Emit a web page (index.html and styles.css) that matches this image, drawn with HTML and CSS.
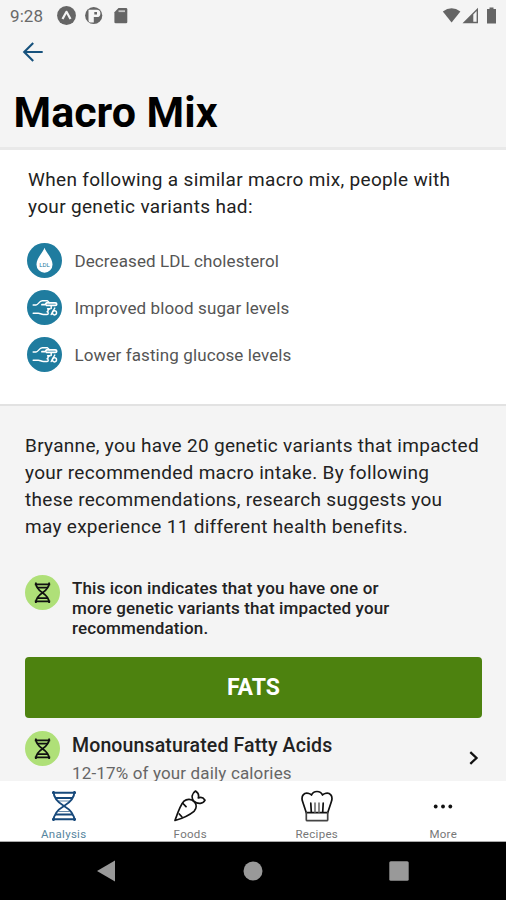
FILE: index.html
```html
<!DOCTYPE html>
<html lang="en">
<head>
<meta charset="utf-8">
<title>Macro Mix</title>
<link rel="stylesheet" href="styles.css">
</head>
<body>
<svg class="defs" width="0" height="0" aria-hidden="true">
  <symbol id="hand" viewBox="0 0 34 34">
    <circle cx="17" cy="17" r="17" fill="#1f7c9f"/>
    <g fill="none" stroke="#fff" stroke-width="1.400" stroke-linecap="round" stroke-linejoin="round">
      <path d="M6 14.500h2.800c2.200 0 3-4 6-4h5l2 1.800"/>
      <path d="M14.500 14.300h3l1.500-1.800h8.500c1.800 0 1.800 2.500 0 2.500H19" stroke-width="1.700"/>
      <path d="M6 22.500h5c2 0 2.500 1.300 5 1.300h3.500c1.500 0 1.500-2.600 0-2.600M20 18.300h2.500c-1 0-2.200.8-2.200 2.300"/>
      <path d="M27 17.500l-3.500 6.300M23.500 15.500v2.500"/>
      <circle cx="26.700" cy="22.200" r="2"/>
    </g>
  </symbol>
  <symbol id="dna-badge" viewBox="0 0 34 34">
    <circle cx="17" cy="17" r="17" fill="#afe078"/>
    <g fill="none" stroke="#111" stroke-width="1.700">
      <path d="M9.500 9h15M9.500 25.500h15M12 12.300h10M12 22.500h10"/>
      <path d="M10.500 7.200c0 4 2.500 7.300 6.500 10s6.500 6 6.500 10M23.500 7.200c0 4-2.500 7.300-6.500 10s-6.500 6-6.500 10"/>
    </g>
  </symbol>
</svg>
<div class="phone">
  <header class="header">
    <div class="status">
      <span class="clock">9:28</span>
      <svg class="notices" width="74" height="20" viewBox="0 0 74 20">
        <circle cx="9.500" cy="9.500" r="9.400" fill="#656565"/>
        <path d="M5.500 13 9.500 5.800l4 7.200" fill="none" stroke="#f4f4f4" stroke-width="2.200" stroke-linejoin="round"/>
        <circle cx="36.700" cy="9.500" r="8.600" fill="#656565"/>
        <path d="M31.500 3.800h8.300a3.600 3.600 0 0 1 0 7.200h-3v5.500h-3.300q-2 0-2-2z" fill="#f4f4f4"/>
        <path d="M37.300 6h2.700v2.500h-2.700z" fill="#656565"/>
        <path d="M61.500 2H69q1.300 0 1.300 1.300V16q0 1.300-1.300 1.300H58.700q-1.300 0-1.300-1.300V6.300z" fill="#656565"/>
        <path d="M61.500 5.200h6.500" stroke="#c4c4c4" stroke-width="1.800"/>
      </svg>
      <svg class="signals" width="58" height="18" viewBox="0 0 58 18">
        <path d="M.8 4.500Q9.600-2 18.400 4.500L9.600 15.500z" fill="#656565"/>
        <path d="M20.500 16.200 36 .7v15.500z" fill="#656565"/>
        <path d="M31.300 7.400 34.600 4.100v10.700h-3.300z" fill="#f4f4f4"/>
        <path d="M45 2h2.500V.5h4V2H54v14.500h-9z" fill="#656565"/>
      </svg>
    </div>
    <svg class="back" width="22" height="20" viewBox="0 0 22 20" fill="none" stroke="#17527d" stroke-width="2.100">
      <path d="M20.700 10H2.500M11.200 .900 2.200 10l9 9.100"/>
    </svg>
    <h1>Macro Mix</h1>
  </header>

  <section class="benefits">
    <p class="intro">When following a similar macro mix, people with<br>your genetic variants had:</p>
    <ul>
      <li>
        <svg width="35" height="35" viewBox="0 0 34 34">
          <circle cx="17" cy="17" r="17" fill="#1f7c9f"/>
          <path d="M17 4.500C16 8.500 9.200 14.500 9.200 21a7.800 7.800 0 0 0 15.600 0C24.800 14.500 18 8.500 17 4.500z" fill="#fff"/>
          <text class="ldl" x="17" y="23.500" text-anchor="middle">LDL</text>
        </svg>
        <span>Decreased LDL cholesterol</span>
      </li>
      <li><svg width="35" height="35"><use href="#hand"/></svg><span>Improved blood sugar levels</span></li>
      <li><svg width="35" height="35"><use href="#hand"/></svg><span>Lower fasting glucose levels</span></li>
    </ul>
  </section>

  <main class="details">
    <p class="summary">Bryanne, you have 20 genetic variants that impacted<br>your recommended macro intake. By following<br>these recommendations, research suggests you<br>may experience 11 different health benefits.</p>
    <div class="note">
      <svg width="35" height="35"><use href="#dna-badge"/></svg>
      <p>This icon indicates that you have one or<br>more genetic variants that impacted your<br>recommendation.</p>
    </div>
    <div class="category">FATS</div>
    <div class="item">
      <svg width="35" height="35"><use href="#dna-badge"/></svg>
      <div class="item-text">
        <h2>Monounsaturated Fatty Acids</h2>
        <p>12-17% of your daily calories</p>
      </div>
      <svg class="chevron" width="10" height="14" viewBox="0 0 10 14" fill="none" stroke="#111" stroke-width="2.300"><path d="M1.300 1.200 7.500 7l-6.200 5.800"/></svg>
    </div>
  </main>

  <nav class="tabs">
    <a class="tab active">
      <svg width="32" height="32" viewBox="0 0 32 32" fill="none" stroke="#17497b" stroke-width="1.900">
        <path d="M4 2.800h24M4 29.200h24M7 8h18M7 24.500h18" />
        <path d="M10.500 11h11M10.500 21.500h11" stroke="#6589aa" stroke-width="1.200"/>
        <path d="M5.500 1c0 6.500 4.500 11.500 10.500 15s10.500 8.500 10.500 15M26.500 1c0 6.500-4.500 11.500-10.500 15S5.500 24.500 5.500 31"/>
      </svg>
      <span>Analysis</span>
    </a>
    <a class="tab">
      <svg width="32" height="32" viewBox="0 0 32 32" fill="none" stroke="#111" stroke-width="1.700" stroke-linejoin="round" stroke-linecap="round">
        <path d="M1 30.500C4 22 6.500 14.500 10 11.200c3-2.800 7.500-2.400 10 .3 2.900 3 2.800 7 0 9.800C16 24.600 9 28.200 1 30.500z"/>
        <path d="M19.500 11C17 7 18.200 3.200 21.500 1c3 2 3.600 4.400 2.800 7 2.500-1.200 5-.4 6.700 2.200-1.800 3.600-6.800 4.600-11.500.8zM9 13.500l3 3.200M5.300 24l2.500 2.800"/>
      </svg>
      <span>Foods</span>
    </a>
    <a class="tab">
      <svg width="32" height="32" viewBox="0 0 32 32" fill="none" stroke="#111" stroke-width="1.700" stroke-linejoin="round" stroke-linecap="round">
        <path d="M5.300 22.700 1.600 11.500C-.3 6 3 2 8 3.500q1.500.4 2.500 1.500C12.500.3 19.500.3 21.500 5q1-1.100 2.500-1.500c5-1.500 8.300 2.500 6.400 8l-3.700 11.200z"/>
        <path d="M5.300 22.700v7q0 1 1 1h19.400q1 0 1-1v-7" stroke="#444"/>
        <path d="M9.800 13.200l.5 9M22.200 13.200l-.5 9"/>
        <path d="M14 13v9M18 13v9" stroke="#777"/>
      </svg>
      <span>Recipes</span>
    </a>
    <a class="tab">
      <svg width="32" height="32" viewBox="0 0 32 32" fill="#111"><circle cx="8.700" cy="16.500" r="1.900"/><circle cx="16" cy="16.500" r="1.900"/><circle cx="23.300" cy="16.500" r="1.900"/></svg>
      <span>More</span>
    </a>
  </nav>
  <footer class="system">
    <svg width="20" height="24" viewBox="0 0 20 24"><path d="M1 12 19 1.500v21z" fill="#999"/></svg>
    <svg width="20" height="20" viewBox="0 0 20 20"><circle cx="10" cy="10" r="9.500" fill="#999"/></svg>
    <svg width="20" height="20" viewBox="0 0 20 20"><rect x=".3" y=".3" width="19.400" height="19.400" rx="1.500" fill="#999"/></svg>
  </footer>
</div>
</body>
</html>
```

FILE: styles.css
```css
* { box-sizing: border-box; margin: 0; padding: 0; }

body {
  font-family: Roboto, sans-serif;
  color: #222;
  background: #f4f4f4;
  overflow: hidden;
}

svg { display: block; flex: none; }
.defs { position: absolute; }

.phone {
  width: 506px;
  height: 900px;
  display: flex;
  flex-direction: column;
  overflow: hidden;
}

.header { height: 150px; flex: none; border-bottom: 3px solid #e9e9e9; }

.status {
  height: 32px;
  display: flex;
  align-items: center;
  padding: 0 8px 0 10px;
}
.clock { width: 46.500px; font-size: 17px; color: #696969; letter-spacing: .1px; }
.signals { margin-left: auto; margin-right: -2px; }

.back { margin: 10px 0 0 22px; }

h1 {
  margin: 25px 0 0 13.500px;
  font-size: 43px;
  line-height: 50px;
  font-weight: 700;
  color: #000;
  white-space: nowrap;
}

.benefits {
  height: 254px;
  flex: none;
  padding: 16px 27px 0;
  background: #fff;
}
.intro, .summary {
  font-size: 19px;
  line-height: 27px;
  letter-spacing: .3px;
  white-space: nowrap;
}
.intro { padding-left: 1px; letter-spacing: .330px; }
.benefits ul { list-style: none; margin-top: 23px; display: grid; gap: 12px; }
.benefits li {
  display: flex;
  align-items: center;
  gap: 12.500px;
  height: 35px;
  font-size: 17px;
  letter-spacing: .1px;
  color: #555;
}
.ldl { font-size: 6px; letter-spacing: 0; fill: #1f7c9f; }

.details {
  height: 377px;
  flex: none;
  padding: 26px 24px 0 25px;
  border-top: 2px solid #e2e2e2;
  overflow: hidden;
}

.note { display: flex; gap: 12px; margin-top: 35px; }
.note p {
  padding-top: 3px;
  font-size: 17px;
  line-height: 20px;
  font-weight: 500;
  letter-spacing: .140px;
  white-space: nowrap;
}

.category {
  height: 61px;
  margin-top: 19px;
  border-radius: 4px;
  background: #4d820f;
  color: #fff;
  font-size: 23px;
  line-height: 61px;
  font-weight: 700;
  text-align: center;
}

.item { display: flex; gap: 12px; margin-top: 13px; }
.item h2 {
  margin-top: 3px;
  font-size: 19.500px;
  line-height: 24px;
  font-weight: 500;
  letter-spacing: .130px;
}
.item p { margin-top: 5px; font-size: 17px; line-height: 20px; letter-spacing: .150px; color: #666; }
.item-text { white-space: nowrap; }
.chevron { margin: 20px 3px 0 auto; }

.tabs {
  height: 61px;
  flex: none;
  display: grid;
  grid-template-columns: repeat(4, 1fr);
  background: #fff;
  border-bottom: 1px solid #aaa;
}
.tab {
  display: flex;
  flex-direction: column;
  align-items: center;
  padding: 9px 0 0 1px;
  font-size: 11.500px;
  line-height: 14px;
  letter-spacing: .3px;
  color: #777;
}
.tab span { margin-top: 5px; }
.tab.active { color: #5686a0; }

.system {
  height: 58px;
  flex: none;
  display: flex;
  align-items: center;
  justify-content: space-between;
  padding: 0 97px 0 96px;
  background: #000;
}
```
